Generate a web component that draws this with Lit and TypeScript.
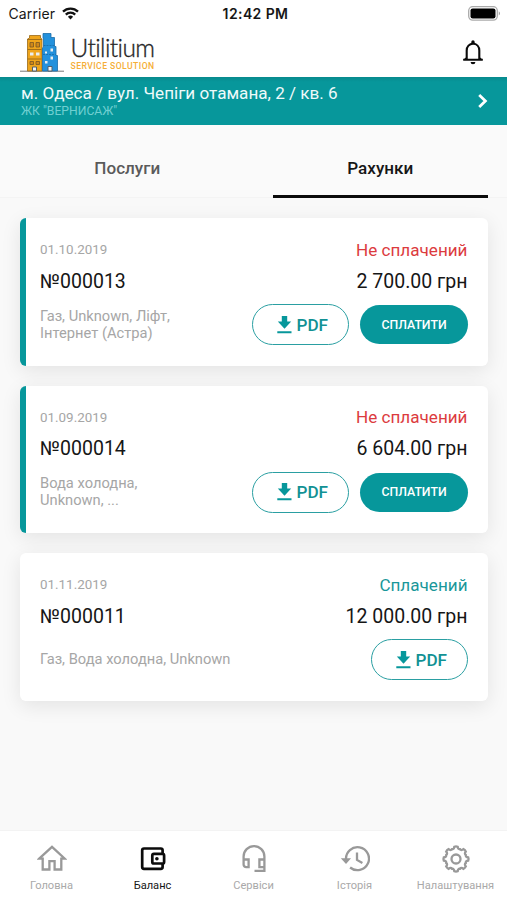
import { LitElement, html, css, svg, nothing } from "lit";
import { customElement, property } from "lit/decorators.js";
import { classMap } from "lit/directives/class-map.js";

interface Invoice {
  date: string;
  number: string;
  services: string[];
  total: string;
  paid: boolean;
}

const INVOICES: Invoice[] = [
  { date: "01.10.2019", number: "№000013", services: ["Газ, Unknown, Ліфт,", "Інтернет (Астра)"], total: "2 700.00 грн", paid: false },
  { date: "01.09.2019", number: "№000014", services: ["Вода холодна,", "Unknown, ..."], total: "6 604.00 грн", paid: false },
  { date: "01.11.2019", number: "№000011", services: ["Газ, Вода холодна, Unknown"], total: "12 000.00 грн", paid: true },
];

/* Eight-toothed outline with softened corners */
const gearPath = (() => {
  const pt = (deg: number, r: number) => {
    const a = ((deg - 90) * Math.PI) / 180;
    return `${(15 + r * Math.cos(a)).toFixed(2)} ${(15 + r * Math.sin(a)).toFixed(2)}`;
  };
  let d = `M${pt(-8, 12.3)}`;
  for (let k = 0; k < 8; k++) {
    const c = k * 45;
    d += `Q${pt(c, 12.9)} ${pt(c + 8, 12.3)}Q${pt(c + 12, 9.6)} ${pt(c + 22.5, 10.6)}Q${pt(c + 33, 9.6)} ${pt(c + 37, 12.3)}`;
  }
  return d + "Z";
})();

const TABS = [
  { label: "Головна", active: false, icon: svg`<path d="M2.2 14.700 15 2.900l12.800 11.800h-3.500v10.800h-6.700v-8.300h-5.200v8.300H5.700V14.700Z"/>` },
  { label: "Баланс", active: true, icon: svg`<rect x="4.200" y="4.500" width="20.400" height="20.400" rx="1.800"/><rect x="14.300" y="9.900" width="11.800" height="9.600" rx="1.600" fill="#fff"/><circle cx="18.900" cy="14.700" r="1.800" class="solid"/>` },
  { label: "Сервіси", active: false, icon: svg`<path d="M4.600 17V12.500a10.400 10.400 0 0 1 20.800 0V26.800H15.500M4.600 15.500h5v7.600H7.200a2.600 2.600 0 0 1-2.600-2.600ZM25.400 15.500h-5v7.600h5"/>` },
  { label: "Історія", active: false, icon: svg`<path d="M6 15.400A11.500 11.500 0 1 1 10.100 23.500M17 8.600v7.300l5.400 3.100"/><path d="M.8 14.300H11L6 20Z" class="solid nostroke"/>` },
  { label: "Налаштування", active: false, icon: svg`<path d="${gearPath}"/><circle cx="15" cy="15" r="4.500"/>` },
];

@customElement("invoice-card")
export class InvoiceCard extends LitElement {
  @property({ attribute: false }) invoice!: Invoice;

  static styles = css`
    :host { display: block; }
    .card {
      box-sizing: border-box; height: 147.5px; padding: 20.5px 20px 0 14px;
      background: #fff; border-radius: 6px; border-left: 6px solid #fff;
      box-shadow: 0 5px 20px rgba(0, 0, 0, 0.09);
    }
    .due { border-left-color: #07979b; }
    .row { display: flex; justify-content: space-between; align-items: center; }
    .top { height: 22px; }
    .mid { height: 41px; }
    .date { font-size: 13.4px; color: #a6a6a6; }
    .status { font-size: 17.1px; color: #dc3b3e; }
    .paid { color: #19979a; }
    .number, .total { font-size: 19.5px; color: #161616; }
    .bottom { height: 46px; }
    .services { font-size: 14.7px; line-height: 17.3px; color: #a6a6a6; }
    .line { display: block; white-space: nowrap; }
    .actions { display: flex; gap: 11px; margin-right: -0.5px; }
    .btn {
      box-sizing: border-box; display: flex; align-items: center; justify-content: center;
      height: 41px; border-radius: 21px; font-weight: 500; font-family: inherit;
    }
    .pdf { width: 97.5px; border: 1.3px solid #2a9fa2; color: #129194; font-size: 17.1px; gap: 5px; padding-left: 4px; }
    .dl { width: 15px; height: 18px; display: block; fill: #07979b; }
    .pay { width: 108px; height: 39px; align-self: center; background: #07979b; color: #fff; font-size: 12.3px; }
  `;

  render() {
    const i = this.invoice;
    return html`
      <article class=${classMap({ card: true, due: !i.paid })}>
        <div class="row top">
          <span class="date">${i.date}</span>
          <span class=${classMap({ status: true, paid: i.paid })}>${i.paid ? "Сплачений" : "Не сплачений"}</span>
        </div>
        <div class="row mid">
          <span class="number">${i.number}</span>
          <span class="total">${i.total}</span>
        </div>
        <div class="row bottom">
          <div class="services">${i.services.map((s) => html`<span class="line">${s}</span>`)}</div>
          <div class="actions">
            <div class="btn pdf">
              <svg class="dl" viewBox="0 0 15 18"><path d="M4.800 0h5.400v5.600h4L7.500 12.700.8 5.600h4ZM.3 15.200h14.200v2H.3Z" /></svg>
              <span>PDF</span>
            </div>
            ${i.paid ? nothing : html`<div class="btn pay">СПЛАТИТИ</div>`}
          </div>
        </div>
      </article>
    `;
  }
}

@customElement("app-root")
export class AppRoot extends LitElement {
  static styles = css`
    :host {
      display: flex; flex-direction: column; width: 507px; height: 900px;
      overflow: hidden; background: #f9f9f9; font-family: Roboto, sans-serif;
    }
    svg { display: block; }
    .status {
      height: 27px; flex: none; display: grid; grid-template-columns: 1fr auto 1fr; align-items: center;
      background: #fff; padding: 0 6px 0 8.5px; font-family: Inter, sans-serif; font-size: 14px; color: #161616;
    }
    .carrier { display: flex; align-items: center; gap: 7px; letter-spacing: 0.1px; }
    .clock { font-weight: 600; letter-spacing: 0.4px; padding-left: 1.5px; }
    .battery { justify-self: end; }
    .header {
      height: 49.5px; flex: none; display: flex; align-items: center; justify-content: space-between;
      background: #fff; padding: 0 22px 0 20px;
    }
    .brand { display: flex; gap: 6.5px; }
    .name { font-family: Lato, sans-serif; font-size: 24.5px; line-height: 28px; padding-top: 2px; color: #262626; font-weight: 300; -webkit-text-stroke: 0.35px #262626; font-variant-ligatures: none; letter-spacing: -0.6px; }
    .tag { font-size: 8.6px; line-height: 9px; color: #f5ae36; font-weight: 500; letter-spacing: 0.45px; }
    .words { display: flex; flex-direction: column; white-space: nowrap; width: 90px; }
    .banner {
      height: 48.5px; flex: none; box-sizing: border-box; display: flex; justify-content: space-between; align-items: center;
      background: linear-gradient(#078a8e, #07979b 5px); padding: 0 18px 0 21px; color: #fff;
    }
    .address { font-size: 17.1px; line-height: 20px; color: #effafa; }
    .complex { font-size: 12.2px; line-height: 16px; color: #6fcfd1; }
    .tabs {
      height: 73px; flex: none; box-sizing: border-box; display: grid; grid-template-columns: 214.5px 214.5px;
      column-gap: 38.5px; padding-left: 20px; background: #fafafa; border-bottom: 1px solid #f4f4f4;
    }
    .tab { display: flex; align-items: center; justify-content: center; padding-top: 15.5px; font-size: 17.1px; font-weight: 500; color: #5a5a5a; border-bottom: 3px solid transparent; margin-bottom: -1px; }
    .on { color: #161616; border-bottom-color: #0b0b0b; }
    .list { flex: 1; display: flex; flex-direction: column; gap: 20px; padding: 20.3px 19.5px 0 20px; }
    .nav {
      height: 70.5px; flex: none; box-sizing: border-box; display: grid; grid-template-columns: repeat(5, 101px);
      justify-content: center; background: #fff; border-top: 1px solid #f3f3f3;
    }
    .item { display: flex; flex-direction: column; align-items: center; padding-top: 13px; gap: 3px; font-size: 11.1px; line-height: 18px; color: #a9a9a9; }
    .current { color: #161616; }
    .glyph { width: 30px; height: 30px; fill: none; stroke: #999; stroke-width: 2.3; color: #999; }
    .current .glyph { stroke: #0b0b0b; color: #0b0b0b; stroke-width: 2.7; }
    .solid { fill: currentColor; }
    .nostroke, .current .solid { stroke: none; }
  `;

  render() {
    return html`
      <div class="status">
        <div class="carrier">
          <span>Carrier</span>
          <svg width="17" height="13" viewBox="0 0 17 13" fill="none" stroke="#111" stroke-width="2.300">
            <path d="M1 4.600a10.700 10.700 0 0 1 15 0M3.800 7.600a6.700 6.700 0 0 1 9.400 0" />
            <path d="M5.900 9.700a3.800 3.800 0 0 1 5.200 0L8.500 12.600Z" fill="#111" stroke="none" />
          </svg>
        </div>
        <span class="clock">12:42 PM</span>
        <svg class="battery" width="33" height="15" viewBox="0 0 33 15">
          <rect x=".7" y=".7" width="28.600" height="13.400" rx="4" fill="none" stroke="#aaa" stroke-width="1.300" />
          <rect x="2.500" y="2.400" width="25" height="10" rx="2.200" />
          <path d="M30.800 5.200q2 2.200 0 4.400Z" fill="#888" />
        </svg>
      </div>
      <header class="header">
        <div class="brand">
          <svg width="44" height="40" viewBox="0 0 44 40">
            <path d="M0 39.200h44" stroke="#777" />
            <path d="M7.500 39V7l2-1V3.500h11V6l1.500 1v32Z" fill="#efa51c" stroke="#9b6a17" stroke-width=".8" />
            <path d="M22.500 39V16l1-1V6.500h-.5V1.500h8v4h3.500v9h1.500v9h1.500V39Z" fill="#2391dc" stroke="#1b6ca8" stroke-width=".8" />
            <path d="M7 7.500h15M7.500 17.500h14M7.500 27h14" stroke="#a36f17" />
            <path d="M23.500 13.500h11M23 22.500h13" stroke="#1a73b4" stroke-dasharray="2 1" />
            <path d="M10 10.500h3.500v4.500H10ZM16 10.500h3.500v4.500H16ZM10 29.500h3.500v3H10ZM16 29.500h3.500v3H16Z" fill="#cf881a" stroke="#765726" stroke-width=".8" />
            <path d="M10 20.500h3.500v3H10ZM16 20.500h3.500v3H16ZM30.500 16.500h2.500v3h-2.500ZM25 19.500h2v2h-2ZM30.500 24.500h2.500v3h-2.500ZM25 29h2.500v2.500H25Z" fill="#e9eef0" />
            <path d="M12.500 39v-4h4v4ZM28 39v-4.500h4V39Z" fill="#f5f5f5" stroke="#53616b" />
          </svg>
          <div class="words"><span class="name">Utilitium</span><span class="tag">SERVICE SOLUTION</span></div>
        </div>
        <svg width="24" height="26" viewBox="0 0 24 26" fill="none" stroke="#0b0b0b" stroke-width="2.100">
          <path d="M5.700 20.500V11.500C5.700 7.500 8.300 4.700 12 4.700s6.300 2.800 6.300 6.800v9M2.200 20.800h19.600" />
          <path d="M10.300 5V3a1.700 1.700 0 0 1 3.400 0v2ZM9.600 22.900h4.800a2.400 2.400 0 0 1-4.800 0Z" fill="#0b0b0b" stroke="none" />
          <path d="m5.500 18-3.300 2.800h19.600L18.500 18v2h-13Z" fill="#0b0b0b" stroke="none" />
        </svg>
      </header>
      <div class="banner">
        <div>
          <div class="address">м. Одеса / вул. Чепіги отамана, 2 / кв. 6</div>
          <div class="complex">ЖК "ВЕРНИСАЖ"</div>
        </div>
        <svg width="12" height="16" viewBox="0 0 12 16" fill="none" stroke="#fff" stroke-width="2.800"><path d="m2.200 2 6.200 6-6.200 6" /></svg>
      </div>
      <div class="tabs">
        <div class="tab">Послуги</div>
        <div class="tab on">Рахунки</div>
      </div>
      <main class="list">${INVOICES.map((i) => html`<invoice-card .invoice=${i}></invoice-card>`)}</main>
      <nav class="nav">
        ${TABS.map((t) => html`
          <div class=${classMap({ item: true, current: t.active })}>
            <svg class="glyph" viewBox="0 0 30 30">${t.icon}</svg>
            <span>${t.label}</span>
          </div>`)}
      </nav>
    `;
  }
}
